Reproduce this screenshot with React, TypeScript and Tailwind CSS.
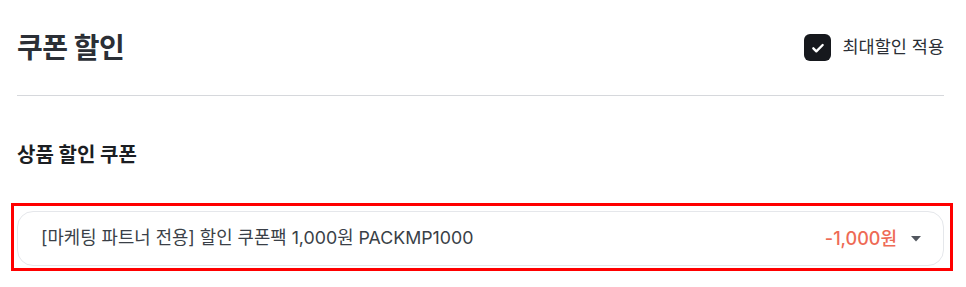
import React from "react";

export default function App() {
  const font = { fontFamily: 'Inter, "Noto Sans CJK KR", sans-serif' };
  return (
    <div className="w-[966px] h-[287px] bg-white pl-[17px] pr-[22px] text-[#111827]" style={font}>
      {/* Header */}
      <div className="flex items-center justify-between h-[95px]">
        <h1 className="text-[28px] font-bold text-[#2b2f36] tracking-[-0.5px]">쿠폰 할인</h1>
        <label className="flex items-center gap-[11px]">
          <span className="w-[27px] h-[27px] rounded-[6px] bg-[#16181d] flex items-center justify-center">
            <svg width="16" height="16" viewBox="0 0 24 24" fill="none" stroke="white" strokeWidth={3.5} strokeLinecap="round" strokeLinejoin="round">
              <path d="M5 12.5l4.5 4.5L19 7.5" />
            </svg>
          </span>
          <span className="text-[17.5px] text-[#2b2f36]">최대할인 적용</span>
        </label>
      </div>
      <div className="border-t border-[#d6d8dc]" />

      {/* Product coupons */}
      <h2 className="mt-[45px] text-[20px] leading-[28px] font-bold text-[#1b1e23]">상품 할인 쿠폰</h2>

      <div className="relative mt-[42px]">
        <div className="flex items-center justify-between h-[55px] rounded-[16px] border border-[#e5e7eb] pl-[23px] pr-[22px]">
          <span className="text-[17.8px] text-[#3a3f47]">[마케팅 파트너 전용] 할인 쿠폰팩 1,000원 PACKMP1000</span>
          <div className="flex items-center gap-[14px]">
            <span className="text-[18px] font-medium text-[#ee6a55]">-1,000원</span>
            <svg width="10" height="6" viewBox="0 0 10 6">
              <path d="M0 0h10L5 5.5z" fill="#52575f" />
            </svg>
          </div>
        </div>
        {/* highlight overlay */}
        <div className="absolute -left-[6px] -right-[9px] -top-[8px] -bottom-[5px] border-[3px] border-[#ff0000] pointer-events-none" />
      </div>
    </div>
  );
}
